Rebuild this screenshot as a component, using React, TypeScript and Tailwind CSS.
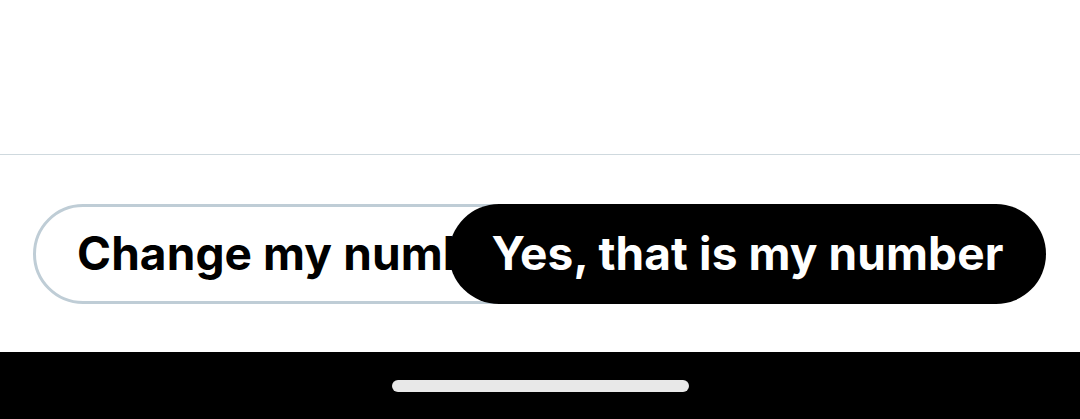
export default function App() {
  return (
    <div className="flex h-[419px] w-[1080px] flex-col bg-white font-['Inter',sans-serif]">
      <div className="h-[154px] shrink-0" />
      <div className="h-px shrink-0 bg-[#cfd9de]" />
      <div className="flex flex-1 items-center px-[33px]">
        <button className="flex h-[100px] w-[506px] shrink-0 items-center overflow-hidden rounded-full border-[3px] border-[#bfcdd6] bg-white pl-[41px] text-left">
          <span className="whitespace-nowrap text-[46px] font-bold tracking-[0.1px] text-black">
            Change my number
          </span>
        </button>
        <button className="relative z-10 -ml-[90px] flex h-[100px] w-[597px] shrink-0 items-center justify-center rounded-full bg-black">
          <span className="whitespace-nowrap text-[46px] font-bold tracking-[0.1px] text-white">
            Yes, that is my number
          </span>
        </button>
      </div>
      <div className="flex h-[67px] shrink-0 items-center justify-center bg-black">
        <div className="h-[12px] w-[297px] rounded-full bg-[#e8e8e8]" />
      </div>
    </div>
  );
}
